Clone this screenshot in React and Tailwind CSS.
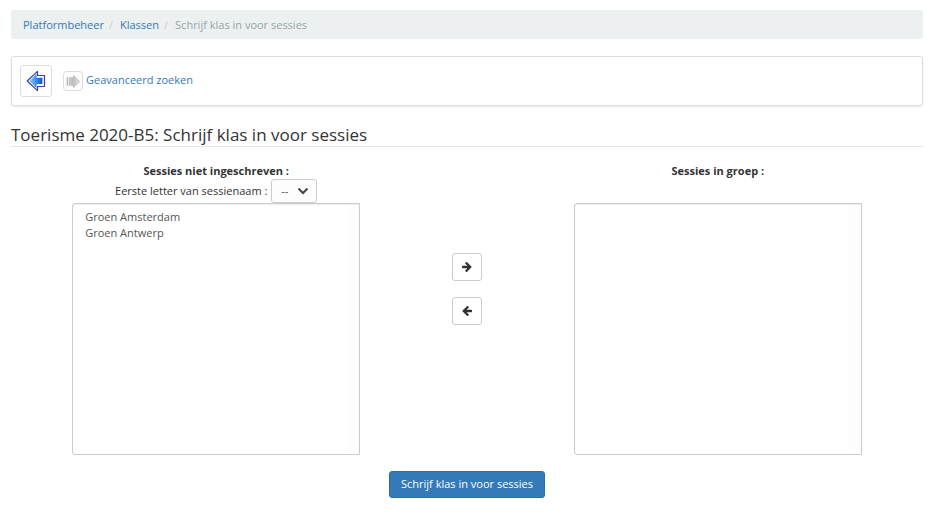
import { useId } from "react";

const sessions = ["Groen Amsterdam", "Groen Antwerp"];

function BackIcon() {
  return (
    <svg width="20" height="22" viewBox="0 0 20 22" aria-hidden="true">
      <defs>
        <linearGradient id="back" x1="0" x2="1">
          <stop offset="0" stopColor="#8ed0fb" />
          <stop offset="0.5" stopColor="#3a93ea" />
          <stop offset="1" stopColor="#0d56bd" />
        </linearGradient>
      </defs>
      <path d="M1.2 11 L11.5 1.4 V5.5 H18.5 V16.5 H11.5 V20.6 Z" fill="#fff" stroke="#3a3eae" strokeWidth="1.2" strokeLinejoin="round" />
      <path d="M3.2 11 L10.6 4 V7.8 H16.4 V14 H10.6 V18 Z" fill="url(#back)" />
    </svg>
  );
}

function ForwardIcon() {
  return (
    <svg width="20" height="20" viewBox="0 0 20 20" aria-hidden="true">
      <defs>
        <linearGradient id="forward" x1="0" x2="1">
          <stop offset="0" stopColor="#b8b8b8" />
          <stop offset="1" stopColor="#dedede" />
        </linearGradient>
      </defs>
      <rect x="0.5" y="0.5" width="19" height="19" rx="3" fill="#fdfdfd" stroke="#dcdcdc" />
      <path d="M4 6.5h1v8H4z M6.5 6.5h0.8v8h-0.8z" fill="#bdbdbd" stroke="#bababa" strokeWidth="0.7" />
      <path d="M8.5 6.5 H10.7 V4.5 L16.5 10.5 L10.7 16.5 V14.5 H8.5 Z" fill="url(#forward)" stroke="#b8b8b8" strokeWidth="0.8" strokeLinejoin="round" />
    </svg>
  );
}

const arrowPath =
  "M1472 960q0 54-37 91l-651 651q-39 37-91 37-51 0-90-37l-75-75q-38-38-38-91t38-91l293-293h-704q-52 0-84.5-37.5t-32.5-90.5v-128q0-53 32.5-90.5t84.5-37.5h704l-293-294q-38-36-38-90t38-90l75-75q38-38 90-38 53 0 91 38l651 651q37 35 37 90z";

function Arrow({ left }) {
  return (
    <svg width="10" height="10" viewBox="0 192 1536 1536" fill="currentColor" aria-hidden="true">
      <path d={arrowPath} transform={left ? "translate(1536 0) scale(-1 1)" : undefined} />
    </svg>
  );
}

function SessionList({ id, items }) {
  return (
    <select
      id={id}
      multiple
      className="block h-[252px] w-72 max-w-full appearance-none overflow-hidden rounded-l-[3px] border border-[#ccc] bg-[linear-gradient(to_left,#fdfdfd_12px,#fff_12px)] px-3 py-[5px] text-[#555] shadow-[inset_0_1px_1px_rgba(0,0,0,0.075)]"
    >
      {items.map((item) => (
        <option key={item} className="h-4 min-h-0 p-0 leading-4">
          {item}
        </option>
      ))}
    </select>
  );
}

export default function App() {
  const letterId = useId();
  const link = "text-[#337ab7]";
  const moveButton =
    "flex h-7 w-[30px] items-center justify-center rounded-[3px] border border-[#ccc] bg-white text-[#333]";
  return (
    <main className="bg-white px-[11px] pt-2.5 font-['Open_Sans',sans-serif] text-[11px] leading-4 text-[#333]">
      <nav aria-label="Breadcrumb" className="rounded-[3px] bg-[#ecf0f1] px-3 py-1.5">
        <ol className="flex h-[17px] items-center">
          <li><a href="#beheer" className={link}>Platformbeheer</a></li>
          <li className="pr-[7px] pl-[5px] text-[#ccc]" aria-hidden="true">/</li>
          <li><a href="#klassen" className={link}>Klassen</a></li>
          <li className="pr-[7px] pl-[5px] text-[#ccc]" aria-hidden="true">/</li>
          <li className="text-[#95a5a6]">Schrijf klas in voor sessies</li>
        </ol>
      </nav>

      <div className="mt-[17px] flex h-[50px] items-center rounded-[3px] border border-[#ddd] px-2 shadow-[0_1px_2px_rgba(0,0,0,0.1)]">
        <a href="#terug" aria-label="Terug" className="flex size-8 items-center justify-center rounded-[3px] border border-[#ddd]">
          <BackIcon />
        </a>
        <a href="#zoeken" className={`ml-[11px] flex items-center gap-[3px] ${link}`}>
          <ForwardIcon />
          <span className="pb-0.5">Geavanceerd zoeken</span>
        </a>
      </div>

      <h1 className="mt-[18px] border-b border-[#e5e5e5] text-[17px] leading-[22px]">
        Toerisme 2020-B5: Schrijf klas in voor sessies
      </h1>

      <form onSubmit={(event) => event.preventDefault()}>
        <div className="mt-4 grid grid-cols-[45fr_10fr_45fr]">
          <div className="flex flex-col items-center">
            <label htmlFor="available" className="font-bold">Sessies niet ingeschreven :</label>
            <div className="flex h-6 items-center gap-1">
              <label htmlFor={letterId}>Eerste letter van sessienaam :</label>
              <div className="relative">
                <select id={letterId} className="block h-6 w-[46px] appearance-none rounded-[3px] border border-[#ccc] bg-[#fdfdfd] pl-[9px] text-[#555]">
                  <option>--</option>
                </select>
                <svg className="pointer-events-none absolute top-2 right-2" width="12" height="8" viewBox="0 0 12 8" aria-hidden="true">
                  <path d="M1.5 1.5 L6 6 L10.5 1.5" fill="none" stroke="#444" strokeWidth="2" />
                </svg>
              </div>
            </div>
            <SessionList id="available" items={sessions} />
          </div>
          <div className="flex flex-col items-center gap-4 pt-[90px]">
            <button type="button" aria-label="Toevoegen" className={moveButton}><Arrow /></button>
            <button type="button" aria-label="Verwijderen" className={moveButton}><Arrow left /></button>
          </div>
          <div className="flex flex-col items-center">
            <label htmlFor="enrolled" className="mb-6 font-bold">Sessies in groep :</label>
            <SessionList id="enrolled" items={[]} />
          </div>
        </div>
        <div className="mt-4 flex justify-center">
          <button type="submit" className="h-[27px] rounded-[3px] border border-[#2e6da4] bg-[#337ab7] px-[11px] pb-0.5 text-white">
            Schrijf klas in voor sessies
          </button>
        </div>
      </form>
    </main>
  );
}
